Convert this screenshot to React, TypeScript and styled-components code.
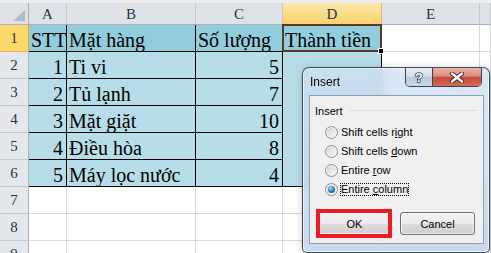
import React from 'react';
import styled, { createGlobalStyle, css } from 'styled-components';

const GlobalStyle = createGlobalStyle`
  html, body { margin: 0; padding: 0; background: #ffffff; }
  #root { width: 491px; height: 253px; }
`;

const HEAD_FILL = '#92cddc';
const BODY_FILL = '#b7dee8';
const BLACK = '#000000';
const GRID = '#d9d9d9';

const Stage = styled.div`
  position: relative;
  width: 491px;
  height: 253px;
  overflow: hidden;
  background: #ffffff;
  font-family: "Liberation Serif", "Times New Roman", serif;
`;

const FormulaEdge = styled.div`
  height: 3px;
  background: #eceef1;
`;

const Sheet = styled.div`
  display: grid;
  grid-template-columns: 29px 38px 129px 87px 99px 98px 1fr;
  grid-template-rows: 22px;
  grid-auto-rows: 27px;
`;

const Corner = styled.div`
  box-sizing: border-box;
  display: flex;
  justify-content: flex-end;
  align-items: flex-end;
  padding: 0 3px 3px 0;
  background: #dfe3e8;
  border-right: 1px solid #a9b0b9;
  border-bottom: 1px solid #a9b0b9;
`;

const SelectAllMark = styled.span`
  width: 12px;
  height: 11px;
  background: #b5bbc3;
  clip-path: polygon(100% 0, 100% 100%, 0 100%);
`;

const ColHeader = styled.div<{ $active?: boolean }>`
  box-sizing: border-box;
  display: flex;
  align-items: center;
  justify-content: center;
  padding-top: 1px;
  font-size: 15px;
  color: #2a3340;
  background: ${(p) => (p.$active ? 'linear-gradient(180deg, #fde9a8 0%, #f8d26e 100%)' : '#dfe3e8')};
  border-right: 1px solid ${(p) => (p.$active ? '#e2b45c' : '#c5cad1')};
  border-bottom: 1px solid ${(p) => (p.$active ? '#e3a83e' : '#a9b0b9')};
`;

const RowHeader = styled.div<{ $active?: boolean }>`
  box-sizing: border-box;
  display: flex;
  align-items: center;
  justify-content: center;
  font-size: 15px;
  color: #2a3340;
  background: ${(p) => (p.$active ? '#fdd86b' : '#e4e7ec')};
  border-right: 1px solid ${(p) => (p.$active ? '#e3a83e' : '#a9b0b9')};
  border-bottom: 1px solid ${(p) => (p.$active ? '#e8b850' : '#c5cad1')};
`;

const Cell = styled.div<{
  $bg?: string;
  $right?: string;
  $bottom?: string;
  $align?: 'left' | 'right';
  $active?: boolean;
}>`
  position: relative;
  box-sizing: border-box;
  display: flex;
  align-items: flex-end;
  justify-content: ${(p) => (p.$align === 'right' ? 'flex-end' : 'flex-start')};
  padding: 0 3px 0 ${(p) => (p.$align === 'right' ? '3px' : '2px')};
  font-size: 20px;
  line-height: 22px;
  color: #000;
  white-space: nowrap;
  overflow: ${(p) => (p.$active ? 'visible' : 'hidden')};
  background: ${(p) => p.$bg ?? '#ffffff'};
  border-right: 1px solid ${(p) => p.$right ?? GRID};
  border-bottom: 1px solid ${(p) => p.$bottom ?? GRID};
  ${(p) =>
    p.$active &&
    css`
      z-index: 1;
      &::after {
        content: '';
        position: absolute;
        left: -1px;
        top: -1px;
        right: -1px;
        bottom: -1px;
        border: 2px solid #5e3529;
        pointer-events: none;
      }
      &::before {
        content: '';
        position: absolute;
        right: -3px;
        bottom: -3px;
        width: 4px;
        height: 4px;
        background: #000;
        border: 1px solid #fff;
        z-index: 2;
      }
    `}
`;

/* ---------- dialog ---------- */

const Window = styled.div`
  position: absolute;
  left: 302px;
  top: 67px;
  width: 188px;
  height: 186px;
  box-sizing: border-box;
  display: flex;
  flex-direction: column;
  padding: 0 5px 8px 6px;
  border: 1px solid rgba(38, 50, 68, 0.85);
  border-radius: 7px 7px 5px 5px;
  background: linear-gradient(180deg, rgba(208, 224, 244, 0.74) 0%, rgba(190, 210, 236, 0.82) 100%);
  backdrop-filter: blur(4px);
  box-shadow: inset 0 0 0 1px rgba(255, 255, 255, 0.6), 1px 2px 8px rgba(0, 0, 0, 0.25);
  font-family: "Liberation Sans", Arial, sans-serif;
`;

const TitleBar = styled.div`
  height: 27px;
  display: flex;
  justify-content: space-between;
  align-items: flex-start;
`;

const Title = styled.span`
  margin: 7px 0 0 1px;
  font-size: 12px;
  line-height: 14px;
  color: #000;
`;

const CaptionButtons = styled.div`
  display: flex;
  height: 19px;
  margin-right: 2px;
  box-sizing: border-box;
  border: 1px solid rgba(40, 52, 70, 0.9);
  border-top: none;
  border-radius: 0 0 5px 5px;
  overflow: hidden;
`;

const CaptionButton = styled.div<{ $kind: 'help' | 'close' }>`
  display: flex;
  align-items: center;
  justify-content: center;
  box-sizing: border-box;
  height: 100%;
  width: ${(p) => (p.$kind === 'help' ? '27px' : '48px')};
  ${(p) =>
    p.$kind === 'help'
      ? css`
          background: linear-gradient(180deg, #e6edf6 0%, #d5e0ee 45%, #b9c9dc 52%, #c9d8ea 100%);
          border-right: 1px solid rgba(40, 52, 70, 0.9);
        `
      : css`
          background: linear-gradient(180deg, #eab2a5 0%, #de8d7d 45%, #c74b3c 52%, #d86a56 100%);
        `}
`;

const Client = styled.div`
  flex: 1;
  display: flex;
  flex-direction: column;
  background: #f0f0f0;
  border: 1px solid #8d9db3;
`;

const GroupHeader = styled.div`
  display: flex;
  align-items: center;
  gap: 7px;
  padding: 9px 7px 0 5px;
  font-size: 11px;
  line-height: 13px;
  color: #000;
`;

const GroupRule = styled.span`
  flex: 1;
  height: 1px;
  margin-bottom: 2px;
  background: #d5dfe6;
`;

const Options = styled.div`
  display: flex;
  flex-direction: column;
  margin-top: 5px;
`;

const Option = styled.label`
  display: flex;
  align-items: center;
  gap: 2px;
  height: 19px;
  padding-left: 15px;
  font-size: 11px;
  color: #000;
`;

const RadioMark = styled.span<{ $checked?: boolean }>`
  position: relative;
  flex: none;
  width: 13px;
  height: 13px;
  box-sizing: border-box;
  border-radius: 50%;
  border: 1px solid #8f8f8f;
  background: linear-gradient(135deg, #cfcfcf 0%, #e9e9e9 55%, #fbfbfb 100%);
  box-shadow: inset 0 0 0 1px #f3f3f3;
  &::after {
    content: '';
    display: ${(p) => (p.$checked ? 'block' : 'none')};
    position: absolute;
    left: 2px;
    top: 2px;
    width: 7px;
    height: 7px;
    border-radius: 50%;
    background: radial-gradient(circle at 38% 32%, #a8dcfb 0%, #2d8bd0 45%, #0a3a6c 100%);
  }
`;

const OptionText = styled.span<{ $focused?: boolean }>`
  line-height: 11px;
  border: 1px ${(p) => (p.$focused ? 'dotted #000' : 'solid transparent')};
  white-space: nowrap;
`;

const ButtonRow = styled.div`
  display: flex;
  gap: 8px;
  margin-top: 13px;
  padding-left: 7px;
`;

const HighlightWrap = styled.div`
  position: relative;
  display: flex;
`;

const Highlight = styled.span`
  position: absolute;
  left: -1px;
  top: -3px;
  width: 76px;
  height: 29px;
  box-sizing: border-box;
  border: 4px solid #ed1c24;
  pointer-events: none;
`;

const Button = styled.button`
  width: 75px;
  height: 23px;
  box-sizing: border-box;
  padding: 0;
  border: 1px solid #707070;
  border-radius: 3px;
  background: linear-gradient(180deg, #f2f2f2 0%, #ebebeb 50%, #dddddd 51%, #cfcfcf 100%);
  box-shadow: inset 0 0 0 1px rgba(255, 255, 255, 0.7);
  font: 11px "Liberation Sans", Arial, sans-serif;
  color: #000;
`;

const HelpIcon = () => (
  <svg width="14" height="14" viewBox="0 0 14 14">
    <text
      x="7"
      y="12"
      textAnchor="middle"
      fontFamily="Liberation Sans, Arial, sans-serif"
      fontWeight="bold"
      fontSize="13"
      fill="#ffffff"
      stroke="#3a4656"
      strokeWidth="1.6"
      paintOrder="stroke"
    >
      ?
    </text>
  </svg>
);

const CloseIcon = () => (
  <svg width="16" height="11" viewBox="0 0 16 11">
    <path d="M3 1.5 L13 9.5 M13 1.5 L3 9.5" stroke="#3b2a2a" strokeWidth="4.4" strokeLinecap="round" fill="none" />
    <path d="M3 1.5 L13 9.5 M13 1.5 L3 9.5" stroke="#ffffff" strokeWidth="2.4" strokeLinecap="round" fill="none" />
  </svg>
);

type Row = (string | number)[];
const data: Row[] = [
  ['STT', 'Mặt hàng', 'Số lượng', 'Thành tiền'],
  [1, 'Ti vi', 5],
  [2, 'Tủ lạnh', 7],
  [3, 'Mặt giặt', 10],
  [4, 'Điều hòa', 8],
  [5, 'Máy lọc nước', 4],
];

const COLUMN_LABELS = ['A', 'B', 'C', 'D', 'E', ''];

function renderRow(r: number) {
  const cells: React.ReactNode[] = [];
  cells.push(
    <RowHeader key={`h${r}`} $active={r === 1}>
      {r}
    </RowHeader>
  );
  const rowData = data[r - 1];
  for (let c = 0; c < 6; c++) {
    const key = `${r}-${c}`;
    if (rowData && c < 3) {
      const v = rowData[c];
      const align = r === 1 || c === 1 ? 'left' : 'right';
      cells.push(
        <Cell key={key} $bg={r === 1 ? HEAD_FILL : BODY_FILL} $right={BLACK} $bottom={BLACK} $align={align}>
          {v}
        </Cell>
      );
    } else if (rowData && c === 3) {
      if (r === 1) {
        cells.push(
          <Cell key={key} $bg={HEAD_FILL} $right={BLACK} $bottom={BLACK} $active>
            {rowData[3]}
          </Cell>
        );
      } else {
        cells.push(
          <Cell key={key} $bg={BODY_FILL} $right={BLACK} $bottom={r === 6 ? BLACK : BODY_FILL} />
        );
      }
    } else {
      cells.push(<Cell key={key} />);
    }
  }
  return cells;
}

export default function App() {
  const options = [
    { pre: 'Shift cells r', u: 'i', post: 'ght' },
    { pre: 'Shift cells ', u: 'd', post: 'own' },
    { pre: 'Entire ', u: 'r', post: 'ow' },
    { pre: 'Entire ', u: 'c', post: 'olumn', checked: true },
  ];
  return (
    <Stage>
      <GlobalStyle />
      <FormulaEdge />
      <Sheet>
        <Corner>
          <SelectAllMark />
        </Corner>
        {COLUMN_LABELS.map((l, i) => (
          <ColHeader key={i} $active={l === 'D'}>
            {l}
          </ColHeader>
        ))}
        {Array.from({ length: 9 }, (_, i) => renderRow(i + 1))}
      </Sheet>

      <Window>
        <TitleBar>
          <Title>Insert</Title>
          <CaptionButtons>
            <CaptionButton $kind="help">
              <HelpIcon />
            </CaptionButton>
            <CaptionButton $kind="close">
              <CloseIcon />
            </CaptionButton>
          </CaptionButtons>
        </TitleBar>
        <Client>
          <GroupHeader>
            <span>Insert</span>
            <GroupRule />
          </GroupHeader>
          <Options>
            {options.map((o, i) => (
              <Option key={i}>
                <RadioMark $checked={o.checked} />
                <OptionText $focused={o.checked}>
                  {o.pre}
                  <u>{o.u}</u>
                  {o.post}
                </OptionText>
              </Option>
            ))}
          </Options>
          <ButtonRow>
            <HighlightWrap>
              <Button>OK</Button>
              <Highlight />
            </HighlightWrap>
            <Button>Cancel</Button>
          </ButtonRow>
        </Client>
      </Window>
    </Stage>
  );
}
